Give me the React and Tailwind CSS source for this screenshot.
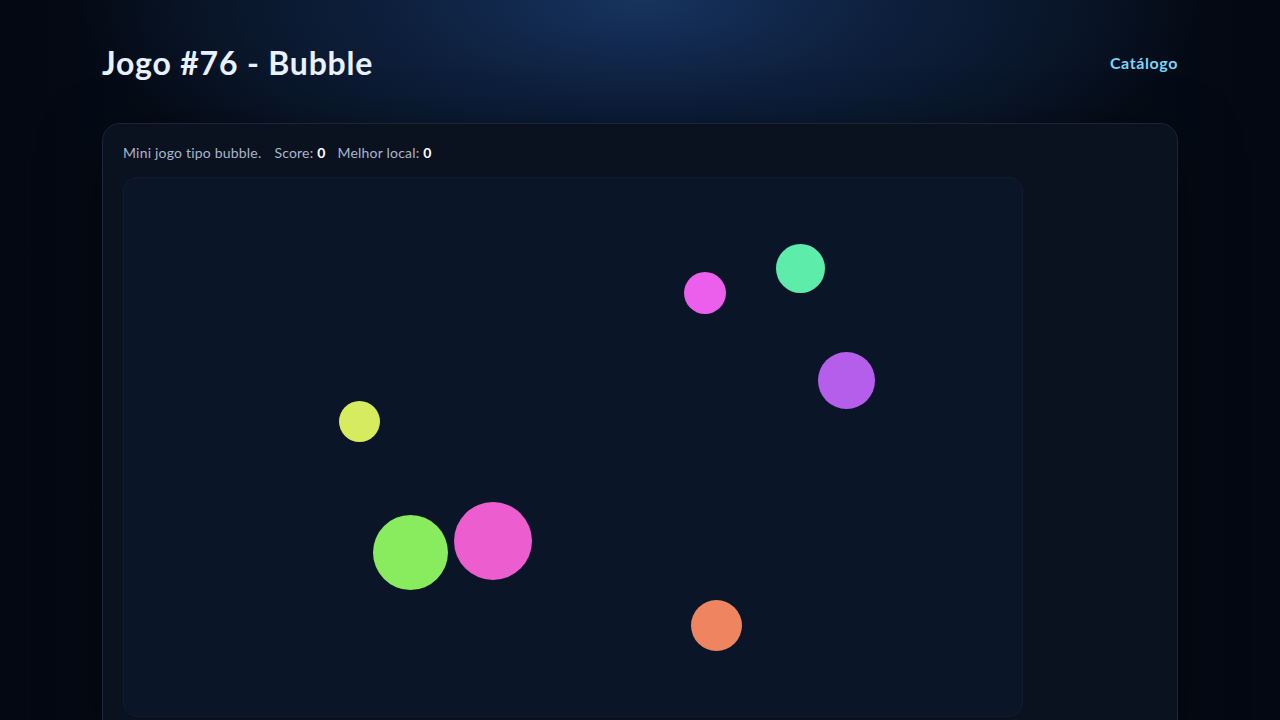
import React from 'react'

const bubbles = [
  { id: 1, left: 560, top: 94, size: 42, color: 'bg-[#ec5eec]' },
  { id: 2, left: 652, top: 66, size: 49, color: 'bg-[#5eecab]' },
  { id: 3, left: 694, top: 174, size: 57, color: 'bg-[#b65eec]' },
  { id: 4, left: 215, top: 223, size: 41, color: 'bg-[#d6ec5e]' },
  { id: 5, left: 249, top: 337, size: 75, color: 'bg-[#88ec5e]' },
  { id: 6, left: 330, top: 324, size: 78, color: 'bg-[#ec5ecf]' },
  { id: 7, left: 567, top: 422, size: 51, color: 'bg-[#ee8460]' },
]

export default function App() {
  return (
    <div className="min-h-screen overflow-hidden bg-[radial-gradient(560px_220px_at_50%_0%,#17335f_0%,#0d1f3c_45%,rgba(7,16,29,0)_100%),linear-gradient(to_right,#030812_0%,#07101d_25%,#07101d_75%,#030812_100%)] font-['Lato','Liberation_Sans',sans-serif]">
      <div className="mx-auto max-w-[1076px]">
        {/* header */}
        <div className="mt-[39px] flex h-12 items-center justify-between">
          <h1 className="text-[32px] font-bold tracking-[0.8px] text-[#e8f1ff]">Jogo #76 - Bubble</h1>
          <a href="#" className="text-[16px] font-bold tracking-[0.6px] text-[#7dd3fc]">
            Catálogo
          </a>
        </div>

        {/* card */}
        <div className="mt-9 rounded-[18px] border border-[#1c2638] bg-[#0a111f] p-5 shadow-[0_20px_60px_rgba(0,0,0,0.55)]">
          <p className="text-[14px] leading-[18px] tracking-[0.2px] text-[#a9b6cc]">
            Mini jogo tipo bubble.
            <span className="ml-[13px]">Score: </span>
            <b className="text-white">0</b>
            <span className="ml-[12px]">Melhor local: </span>
            <b className="text-white">0</b>
          </p>

          <div className="relative mt-[15px] h-[540px] w-[900px] rounded-[14px] border border-[#111c2f] bg-[#0a1528]">
            {bubbles.map((b) => (
              <div
                key={b.id}
                className={`absolute rounded-full ${b.color}`}
                style={{ left: b.left, top: b.top, width: b.size, height: b.size }}
              />
            ))}
          </div>
        </div>
      </div>
    </div>
  )
}
